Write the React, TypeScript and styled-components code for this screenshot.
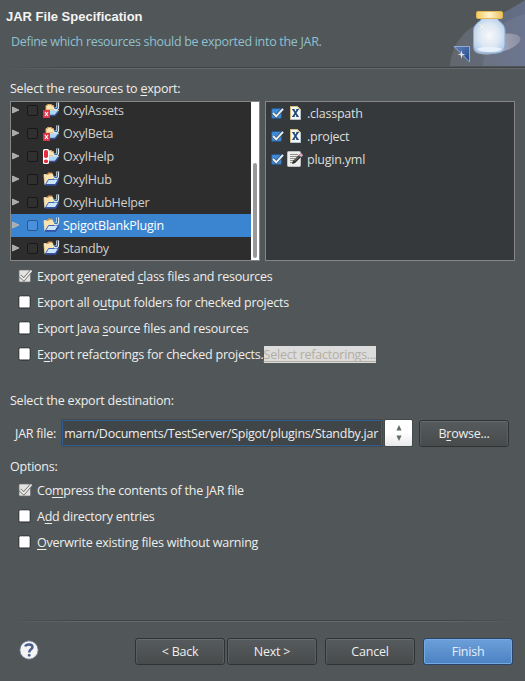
import React from 'react';
import styled, { createGlobalStyle, css } from 'styled-components';

const GlobalStyle = createGlobalStyle`
  html, body { margin: 0; padding: 0; }
  body { background: #515658; }
  svg { display: block; flex: none; }
`;

const Dialog = styled.main`
  width: 525px;
  height: 681px;
  box-sizing: border-box;
  overflow: hidden;
  display: flex;
  flex-direction: column;
  background: #515658;
  color: #eeeeec;
  font: 12.5px/20px 'Open Sans', 'Noto Sans', sans-serif;
  letter-spacing: -0.23px;
  white-space: nowrap;
`;

const Header = styled.header`
  height: 67px;
  display: flex;
  justify-content: space-between;
  flex: none;
`;

const Titles = styled.div`
  padding: 7px 0 0 6px;
`;

const Title = styled.h1`
  margin: 0;
  font: bold 13px/20px 'Liberation Sans', Arial, sans-serif;
  letter-spacing: 0;
  color: #f4f4f2;
`;

const Subtitle = styled.p`
  margin: 5px 0 0 5px;
  letter-spacing: -0.3px;
  color: #8fc1cf;
`;

const Separator = styled.div<{ $toEdge?: boolean }>`
  height: 1px;
  flex: none;
  margin: 0 ${p => (p.$toEdge ? 0 : 5)}px 0 5px;
  border-bottom: 1px solid;
  border-image: linear-gradient(90deg, #515658, #64696b 15%, #64696b 85%, ${p => (p.$toEdge ? '#64696b' : '#515658')}) 1;
  background: linear-gradient(90deg, #515658, #3f4345 15%, #3f4345 85%, ${p => (p.$toEdge ? '#3f4345' : '#515658')});
`;

const SectionLabel = styled.div<{ $top: number }>`
  margin: ${p => p.$top}px 0 0 10px;
  height: 20px;
  line-height: 22px;
  flex: none;
`;

const Panes = styled.div`
  display: flex;
  gap: 5px;
  margin: 3px 10px 0;
  height: 160px;
  flex: none;
`;

const Pane = styled.div<{ $bg: string }>`
  width: 250px;
  box-sizing: border-box;
  border: 1px solid #868685;
  background: ${p => p.$bg};
  display: flex;
  overflow: hidden;
`;

const Tree = styled.div`
  flex: 1;
  margin-top: -3px;
`;

const TreeRow = styled.div<{ $selected?: boolean }>`
  height: 23px;
  box-sizing: border-box;
  display: flex;
  align-items: center;
  padding: 0 0 2px 1px;
  color: ${p => (p.$selected ? '#ffffff' : '#d0cfcb')};
  background: ${p => (p.$selected ? '#3b84d0' : 'transparent')};
`;

const TreeBox = styled.span<{ $selected?: boolean }>`
  width: 11px;
  height: 11px;
  box-sizing: border-box;
  margin: 1px 5px 0 7px;
  border: 1px solid ${p => (p.$selected ? '#285a91' : '#181818')};
  border-radius: 2px;
  background: ${p => (p.$selected ? '#4a90dc' : '#303030')};
`;

const RowText = styled.span`
  padding-top: 2px;
`;

const TreeText = styled(RowText)`
  margin-left: 3px;
`;

const ScrollTrack = styled.div`
  width: 8px;
  box-sizing: border-box;
  background: #fff;
  padding: 61px 2px 2px;
  display: flex;
`;

const ScrollThumb = styled.div`
  flex: 1;
  border-radius: 2px;
  background: #999;
`;

const FileList = styled.div`
  flex: 1;
  padding-left: 5px;
`;

const FileRow = styled.div`
  height: 23px;
  box-sizing: border-box;
  padding-bottom: 1px;
  display: flex;
  align-items: center;
  gap: 3px;
  color: #dededc;
`;

const Checks = styled.div<{ $top: number }>`
  margin: ${p => p.$top}px 0 0 18px;
  flex: none;
`;

const CheckRow = styled.div`
  height: 26px;
  display: flex;
  align-items: center;
  gap: 4px;
`;

const Mnemonic = styled.span`
  text-decoration: underline;
  text-decoration-thickness: 1px;
  text-underline-offset: 2px;
  text-decoration-skip-ink: none;
`;

const DisabledLink = styled.span`
  height: 17px;
  line-height: 17px;
  margin-left: -4px;
  background: #dcdcdc;
  color: #b3aea2;
  text-decoration: underline;
  text-decoration-thickness: 1px;
  text-underline-offset: 2px;
  text-decoration-skip-ink: none;
`;

const DestinationRow = styled.div`
  display: flex;
  align-items: center;
  height: 28px;
  margin: 9px 16px 0 15px;
  flex: none;
`;

const FieldLabel = styled.span`
  width: 46px;
  padding-top: 1px;
  flex: none;
`;

const PathField = styled.div`
  width: 322px;
  height: 28px;
  flex: none;
  box-sizing: border-box;
  border: 1px solid #43484b;
  background: #404548;
  box-shadow: inset 0 0 0 1px #315f94;
  border-radius: 2px;
  padding: 2px 4px 0 0;
  letter-spacing: -0.26px;
  display: flex;
  align-items: center;
  justify-content: flex-end;
`;

const Spinner = styled.div`
  width: 29px;
  height: 28px;
  flex: none;
  margin-left: 1px;
  box-sizing: border-box;
  border: 1px solid #454a4c;
  border-radius: 2px;
  background: linear-gradient(#ffffff 50%, #e9e9e9);
  display: flex;
  align-items: center;
  justify-content: center;
`;

const primary = css`
  border-color: #29456a;
  background: linear-gradient(#6da0da, #4a82c3);
  box-shadow: inset 0 0 0 1px #75a9e2;
  color: #e4eefa;
`;

const Button = styled.button<{ $gap?: number; $primary?: boolean }>`
  width: 90px;
  height: 27px;
  flex: none;
  box-sizing: border-box;
  margin: 0 0 0 ${p => p.$gap ?? 0}px;
  padding: 1px 0 0;
  border: 1px solid #303335;
  border-radius: 3px;
  background: linear-gradient(#565b5d, #484b4c);
  box-shadow: inset 0 1px 0 #666b6d, inset 1px 0 0 #5a5f61, inset -1px 0 0 #5a5f61;
  color: #eeeeec;
  font: inherit;
  letter-spacing: inherit;
  ${p => p.$primary && primary}
`;

const Spacer = styled.div`
  flex: 1;
`;

const Footer = styled.footer`
  height: 59px;
  flex: none;
  display: flex;
  align-items: center;
  padding: 0 12px 0 19px;
`;

const Help = styled.span`
  margin-right: 96px;
  margin-top: -3px;
`;

function JarArt() {
  return (
    <svg width="78" height="67" viewBox="0 0 78 67">
      <defs>
        <linearGradient id="swoosh" x1="0" y1="0" x2="1" y2="0">
          <stop offset="0" stopColor="#71777f" stopOpacity=".7" />
          <stop offset="1" stopColor="#687597" />
        </linearGradient>
        <radialGradient id="glass" cx=".5" cy=".5" r=".6">
          <stop offset="0" stopColor="#f8f8fa" />
          <stop offset=".55" stopColor="#dce7f3" />
          <stop offset="1" stopColor="#b0cbe9" />
        </radialGradient>
        <linearGradient id="lid">
          <stop offset="0" stopColor="#f2ca62" />
          <stop offset=".5" stopColor="#fff3cc" />
          <stop offset="1" stopColor="#ecc05a" />
        </linearGradient>
        <linearGradient id="fold" x1="0" y1="0" x2="1" y2="1">
          <stop offset="0" stopColor="#6684bb" />
          <stop offset="1" stopColor="#1c4489" />
        </linearGradient>
        <linearGradient id="shadow">
          <stop offset=".3" stopColor="#b4b2ba" />
          <stop offset="1" stopColor="#8b8fa5" />
        </linearGradient>
      </defs>
      <path d="M3 66C5 42 20 27 39 20C55 14 66 8 78 0V66Z" fill="url(#swoosh)" opacity=".75" />
      <path d="M36 66C37 40 52 20 78 14V66Z" fill="#8188a2" opacity=".3" />
      <ellipse cx="50" cy="44" rx="24" ry="9" transform="rotate(-14 50 44)" fill="url(#shadow)" />
      <path d="M34 18H51V20C55 23 58 26 58 31V44C58 50 55 53 49 53H35C29 53 26.500 50 26.500 44V31C26.500 26 30 23 34 20Z" fill="url(#glass)" stroke="#88abd8" strokeWidth="1" />
      <path d="M30 49C36 46 48 46 55 49C51 53 35 53 30 49Z" fill="#e8f1fb" />
      <rect x="29.500" y="11.500" width="26" height="7" rx="1.500" fill="url(#lid)" stroke="#e3b750" />
      <path d="M32.500 24L37.500 29M37.500 24L32.500 29" stroke="#fff8d8" strokeWidth=".8" />
      <path d="M7 46.500H22.500V62Z" fill="url(#fold)" stroke="#93a9d1" />
      <path d="M14.500 50L15.300 53.700L18.500 54.500L15.300 55.300L14.500 59L13.700 55.300L10.500 54.500L13.700 53.700Z" fill="#dfe4ec" />
    </svg>
  );
}

function Expander() {
  return (
    <svg width="8" height="8" viewBox="0 0 8 8">
      <path d="M.5 1L7 4L.5 7Z" fill="#aaa" stroke="#c4c4c2" strokeWidth=".7" />
    </svg>
  );
}

type Mark = 'error' | 'warning' | undefined;

function ProjectIcon({ mark }: { mark: Mark }) {
  return (
    <svg width="17" height="16" viewBox="0 0 17 16">
      {mark ? (
        <>
          <path d="M3 8V3.500H4.500V2.500H8.500V3.500H10.500V8Z" fill="#fbe3ae" stroke="#d9a765" />
          <path d="M1.500 8.500H15.500L12.500 12.500H4.500Z" fill="#a9d9fa" stroke="#e4f1fb" strokeWidth=".7" />
          <path d="M6 13.500H12L15.300 9.500" fill="none" stroke="#36509b" strokeWidth="1.300" />
        </>
      ) : (
        <>
          <path d="M1 4.500V3.500H4L5 2.500H9L10 4V9L3 13.500H1.800Z" fill="#fbe3ae" stroke="#f9e9c4" strokeWidth=".7" />
          <path d="M3.500 3.500H5L5.500 2.200H9.300" fill="none" stroke="#cf9350" strokeWidth="1.200" />
          <path d="M2.500 13.500L5.500 8.500H15.500L12.300 13.500Z" fill="#c9e5fb" stroke="#4263b4" />
          <path d="M2.300 14H12.500L15.500 9.500" fill="none" stroke="#354da0" strokeWidth="1.300" />
        </>
      )}
      <path d="M14.700 .5V4.800Q14.700 7 12.700 7Q11.300 7 11.300 5.500" fill="none" stroke="#eef7fc" strokeWidth="2.800" />
      <path d="M14.500 .5V4.800Q14.500 6.700 12.700 6.700Q11.500 6.700 11.500 5.500" fill="none" stroke="#306b9d" strokeWidth="1.200" />
      {mark === 'error' && (
        <>
          <rect x="0" y="8" width="7" height="8" fill="#df3548" />
          <path d="M2 10L5 14M5 10L2 14" stroke="#fff" strokeWidth="1.200" />
        </>
      )}
      {mark === 'warning' && (
        <>
          <rect x="0" y="1" width="6" height="15" rx="1.500" fill="#fff" />
          <rect x="1" y="2" width="4" height="8" rx="1.800" fill="#e92b3d" />
          <rect x="1" y="11.500" width="4" height="3.500" rx="1.600" fill="#e92b3d" />
        </>
      )}
    </svg>
  );
}

function BlueCheck() {
  return (
    <svg width="13" height="13" viewBox="0 0 13 13">
      <rect x=".5" y="1.500" width="10" height="10" rx="1.500" fill="#4289d5" stroke="#27588f" />
      <path d="M2 6L5.200 9.300L12 1.800" fill="none" stroke="#23496f" strokeWidth="3.200" />
      <path d="M2 6L5.200 9.300L12 1.800" fill="none" stroke="#eeeeea" strokeWidth="2" />
    </svg>
  );
}

function XmlIcon() {
  return (
    <svg width="17" height="16" viewBox="0 0 17 16">
      <path d="M3.500 1.500H10.500L13.500 4.500V14.500H3.500Z" fill="#f0f7fc" stroke="#b9c4c8" />
      <path d="M3.500 14V1.500H10.500L13.500 4.500" fill="none" stroke="#d7c07d" />
      <path d="M10.500 1.500V4.500H13.500Z" fill="#e3c779" />
      <path d="M6.300 4.500L10.700 11.500M10.700 4.500L6.300 11.500" stroke="#21466e" strokeWidth="1.600" />
      <path d="M5.200 4.500H7.600M9.400 4.500H11.800M5.200 11.500H7.600M9.400 11.500H11.800" stroke="#21466e" />
    </svg>
  );
}

function TextIcon() {
  return (
    <svg width="17" height="16" viewBox="0 0 17 16">
      <rect x=".5" y=".5" width="13" height="15" rx="1" fill="#eeeeec" stroke="#c0c0be" />
      <path d="M3 3.500H11M3 5.500H11M3 7.500H8M3 9.500H7M3 11.500H6" stroke="#8f8f8d" />
      <path d="M7 11L14 4" stroke="#292b28" strokeWidth="3" />
      <path d="M7.500 10L13 4.500" stroke="#81857b" />
      <path d="M5 13L6 9.800L8.300 12Z" fill="#222" />
      <path d="M13 5L15 3" stroke="#e2a3c8" strokeWidth="3.400" />
    </svg>
  );
}

function CheckBox({ checked }: { checked?: boolean }) {
  return (
    <svg width="15" height="14" viewBox="0 0 15 14">
      {checked ? (
        <>
          <rect x="1" y="1" width="11.500" height="12" rx="1" fill="#e3e3e2" stroke="#6b6e6f" strokeWidth=".7" />
          <path d="M2 6.800L5.800 10.500L13.500 1.500" fill="none" stroke="#666968" strokeWidth="3.200" />
          <path d="M2 6.800L5.800 10.500L13.500 1.500" fill="none" stroke="#eeeeec" strokeWidth="1.800" />
        </>
      ) : (
        <rect x=".8" y=".8" width="11.400" height="12.200" rx="1.600" fill="#fff" stroke="#26292a" />
      )}
    </svg>
  );
}

function StepArrows() {
  return (
    <svg width="6" height="16" viewBox="0 0 6 16">
      <path d="M.4 5.500L3 0L5.600 5.500ZM.4 10.500L3 16L5.600 10.500Z" fill="#686b6b" />
    </svg>
  );
}

function HelpIcon() {
  return (
    <svg width="20" height="20" viewBox="0 0 20 20">
      <circle cx="10" cy="10" r="9.200" fill="#f3f3f3" stroke="#64738f" strokeWidth=".9" />
      <path d="M6.300 6.500C7 3.800 13.500 3.400 13.500 7.100C13.500 9.500 10.200 9.200 10.200 12.400" fill="none" stroke="#49608c" strokeWidth="2.500" />
      <rect x="8.800" y="14.100" width="2.800" height="2.500" rx=".8" fill="#49608c" />
    </svg>
  );
}

const projects: { name: string; mark?: Mark; selected?: boolean }[] = [
  { name: 'OxylAssets', mark: 'error' },
  { name: 'OxylBeta', mark: 'error' },
  { name: 'OxylHelp', mark: 'warning' },
  { name: 'OxylHub' },
  { name: 'OxylHubHelper' },
  { name: 'SpigotBlankPlugin', selected: true },
  { name: 'Standby' },
];

const files = ['.classpath', '.project', 'plugin.yml'];

/** Label text in which the character after "&" is underlined. */
function Label({ text }: { text: string }) {
  const at = text.indexOf('&');
  if (at < 0) return <>{text}</>;
  return (
    <>
      {text.slice(0, at)}
      <Mnemonic>{text[at + 1]}</Mnemonic>
      {text.slice(at + 2)}
    </>
  );
}

function CheckOption({ text, checked, children }: { text: string; checked?: boolean; children?: React.ReactNode }) {
  return (
    <CheckRow>
      <CheckBox checked={checked} />
      <RowText><Label text={text} /></RowText>
      {children}
    </CheckRow>
  );
}

export default function App() {
  return (
    <>
      <GlobalStyle />
      <Dialog>
        <Header>
          <Titles>
            <Title>JAR File Specification</Title>
            <Subtitle>Define which resources should be exported into the JAR.</Subtitle>
          </Titles>
          <JarArt />
        </Header>
        <Separator $toEdge />
        <SectionLabel $top={9}><Label text="Select the resources to &export:" /></SectionLabel>
        <Panes>
          <Pane $bg="#2d2d2d">
            <Tree>
              {projects.map(p => (
                <TreeRow key={p.name} $selected={p.selected}>
                  <Expander />
                  <TreeBox $selected={p.selected} />
                  <ProjectIcon mark={p.mark} />
                  <TreeText>{p.name}</TreeText>
                </TreeRow>
              ))}
            </Tree>
            <ScrollTrack><ScrollThumb /></ScrollTrack>
          </Pane>
          <Pane $bg="#35393b">
            <FileList>
              {files.map(name => (
                <FileRow key={name}>
                  <BlueCheck />
                  {name === 'plugin.yml' ? <TextIcon /> : <XmlIcon />}
                  <RowText>{name}</RowText>
                </FileRow>
              ))}
            </FileList>
          </Pane>
        </Panes>
        <Checks $top={2}>
          <CheckOption checked text="Export generated &class files and resources" />
          <CheckOption text="Export all o&utput folders for checked projects" />
          <CheckOption text="Export Java &source files and resources" />
          <CheckOption text="E&xport refactorings for checked projects.">
            <DisabledLink>Select refactorings...</DisabledLink>
          </CheckOption>
        </Checks>
        <SectionLabel $top={23}>Select the export destination:</SectionLabel>
        <DestinationRow>
          <FieldLabel>JAR file:</FieldLabel>
          <PathField>marn/Documents/TestServer/Spigot/plugins/Standby.jar</PathField>
          <Spinner><StepArrows /></Spinner>
          <Spacer />
          <Button type="button"><Label text="B&rowse..." /></Button>
        </DestinationRow>
        <SectionLabel $top={9}>Options:</SectionLabel>
        <Checks $top={1}>
          <CheckOption checked text="Co&mpress the contents of the JAR file" />
          <CheckOption text="A&dd directory entries" />
          <CheckOption text="&Overwrite existing files without warning" />
        </Checks>
        <Spacer />
        <Separator />
        <Footer>
          <Help><HelpIcon /></Help>
          <Button type="button">&lt; Back</Button>
          <Button type="button" $gap={2}>Next &gt;</Button>
          <Button type="button" $gap={8}>Cancel</Button>
          <Button type="button" $gap={8} $primary>Finish</Button>
        </Footer>
      </Dialog>
    </>
  );
}
